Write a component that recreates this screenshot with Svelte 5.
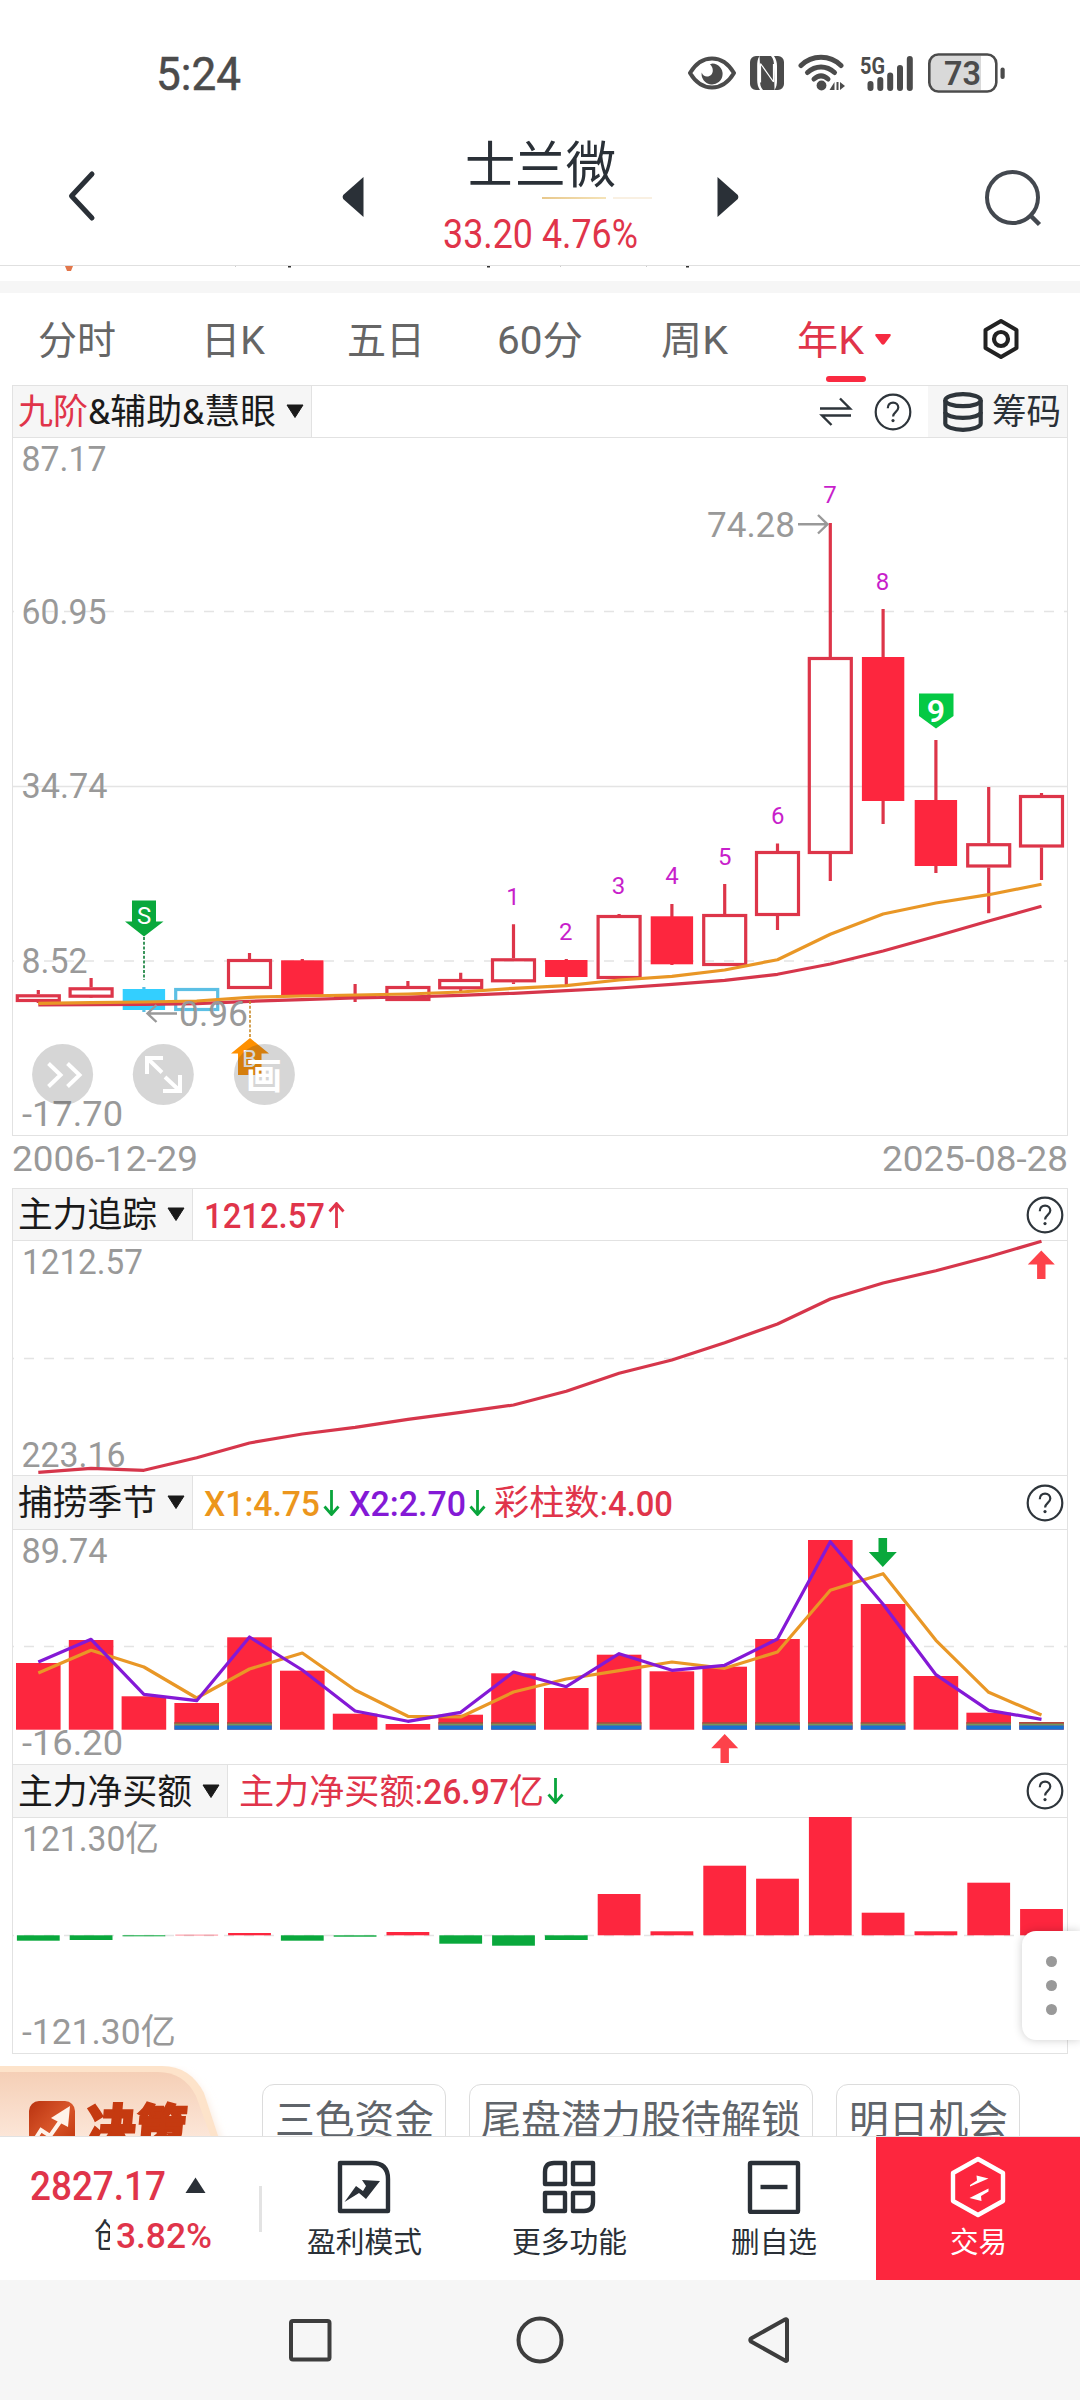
<script>
  const cx = (i) => 38.3 + i * 52.8;
  const path = (ys) => ys.map((y, i) => `${cx(i)},${y}`).join(' ');

  const tabs = [
    { text: '分时', w: 78 },
    { text: '日K', w: 64, shift: true },
    { text: '五日', w: 78 },
    { text: '60分', w: 86 },
    { text: '周K', w: 67 }
  ];

  // high, body top, body bottom, low, kind (h = hollow, f = filled)
  const candles = [
    [990, 994.3, 1002, 1003, 'h'],
    [978, 987.3, 997.7, 997, 'h'],
    [987, 989, 1010, 1012, 'f', 'cyan'],
    [988, 988, 1011, 1011, 'h', 'cyan'],
    [953, 959, 989, 989, 'h'],
    [959, 960.3, 995, 995, 'f'],
    [984, 996, 998.5, 1002, 'f'],
    [981, 986, 1001, 1001, 'h'],
    [972.7, 979, 989.3, 991, 'h'],
    [924.3, 958.3, 982.3, 984, 'h'],
    [959, 960, 977, 985, 'f'],
    [914, 915, 979, 980, 'h'],
    [904, 916.3, 964.3, 965, 'f'],
    [884, 914, 966, 966, 'h'],
    [843.6, 851, 916, 930, 'h'],
    [523, 657, 854, 881, 'h'],
    [609, 657, 801, 824, 'f'],
    [740, 800, 866, 873, 'f'],
    [787, 843.2, 867.5, 913.3, 'h'],
    [793, 795, 847.5, 880, 'h']
  ];
  const maFast = [1003.3, 1002.7, 1002, 1001, 997.3, 996, 995, 994, 992, 988.3, 985.7, 980, 976.3, 970, 959.7, 934.3, 914, 903, 894.7, 884.3];
  const maSlow = [1004.9, 1004.6, 1004.3, 1003.7, 1001.3, 999.7, 998, 997, 995.3, 993.3, 990.7, 988, 984.3, 980.3, 974.3, 964, 951, 936.3, 921, 906.3];
  const counts = [
    [513, 905, '1'], [565.8, 940, '2'], [618.6, 894, '3'], [672, 884, '4'],
    [724.8, 865, '5'], [777.8, 824, '6'], [830, 502.5, '7'], [882.6, 590, '8']
  ];

  const track = [1472.3, 1468.3, 1470.3, 1457.7, 1443, 1434, 1427.3, 1419.3, 1412.3, 1405, 1391.3, 1373.3, 1360, 1342.7, 1324, 1299, 1283, 1270.7, 1256.7, 1241.3];

  const season = [1663, 1640, 1696.3, 1703, 1637.3, 1670.7, 1713.7, 1724, 1714.7, 1673.3, 1688, 1654.7, 1671.3, 1666.7, 1639, 1540, 1604, 1676, 1712.7, 1722];
  const blue = [3, 4, 8, 9, 11, 13, 14, 15, 16, 18, 19];
  const x1 = [1673, 1650.3, 1667, 1698, 1669, 1653, 1690, 1716.3, 1717, 1692, 1679, 1670.7, 1662, 1668.3, 1652, 1590.3, 1573.7, 1640.3, 1692.3, 1715];
  const x2 = [1662, 1639.3, 1694.3, 1700.7, 1637, 1670, 1711, 1721.3, 1712.3, 1672, 1686.7, 1653.7, 1670.3, 1665.3, 1639, 1541.7, 1604.3, 1674.7, 1710.3, 1719.3];

  const netZero = 1935.3;
  const net = [1940.7, 1940, 1936.3, 1934.8, 1933, 1940.7, 1936.7, 1932, 1943.7, 1945.7, 1940, 1894, 1931.3, 1865.7, 1878.7, 1817, 1912.7, 1931.3, 1882.7, 1909];
</script>

{#snippet fit(text, w, size, cls)}
  <svg class="fit {cls}" width={w} height={size} overflow="visible">
    <text x="0" y={size * 0.865} font-size={size} textLength={w} lengthAdjust="spacingAndGlyphs">{text}</text>
  </svg>
{/snippet}

{#snippet axis(text, x, y, w)}
  <text class="axis" {x} {y} textLength={w} lengthAdjust="spacingAndGlyphs">{text}</text>
{/snippet}

{#snippet help()}
  <svg class="help" width="38" height="38" viewBox="0 0 38 38">
    <circle cx="19" cy="19" r="17.3" fill="none" stroke="#2e353b" stroke-width="2.2" />
    <path d="M13.8 15.2c0-3.4 2.2-5.6 5.3-5.6s5.2 2.1 5.2 5c0 4.2-5.2 4.4-5.2 9" fill="none" stroke="#2e353b" stroke-width="2.2" />
    <circle cx="19" cy="27.6" r="1.6" fill="#2e353b" />
  </svg>
{/snippet}

{#snippet caret()}
  <svg width="18" height="15" viewBox="0 0 18 15"><path d="M1 1h16l-8 12.5z" fill="#1a1a1a" stroke="#1a1a1a" stroke-linejoin="round" /></svg>
{/snippet}

{#snippet trend(up)}
  <svg class="trend" width="17" height="26" viewBox="0 0 17 26">
    {#if up}
      <path d="M8.5 26V2M1.5 9.5l7-8 7 8" fill="none" stroke="#e0344a" stroke-width="2.8" />
    {:else}
      <path d="M8.5 0v24M1.5 16.5l7 8 7-8" fill="none" stroke="#0aa53c" stroke-width="2.8" />
    {/if}
  </svg>
{/snippet}

<div class="screen">
  <div class="status">
    {@render fit('5:24', 85, 46, 'clock')}
    <div class="status-icons">
      <svg width="48" height="36" viewBox="0 0 48 36" class="eye">
        <path d="M2 18C8 8 16 3.5 24 3.5S40 8 46 18C40 28 32 32.500 24 32.500S8 28 2 18z" fill="none" stroke="#4b4b4b" stroke-width="4" stroke-linejoin="round" />
        <path d="M24.500 8.500a10.500 10.500 0 1 1-10.800 9c.8 2.500 3 4 5.300 4 3.500 0 5.800-2.600 5.800-6 0-2.500-.8-4.500-2.800-6.300z" fill="#4b4b4b" />
      </svg>
      <svg width="34" height="36" viewBox="0 0 34 36" class="nfc">
        <path d="M6 1h3.500c-2 3-2.300 6-2.300 10v14c0 4 .8 7 2.800 10H6a6 6 0 0 1-6-6V7a6 6 0 0 1 6-6zM24 1h4a6 6 0 0 1 6 6v22a6 6 0 0 1-6 6h-3.500c2-3 2.500-6 2.500-10V11c0-4-1-7-3-10z" fill="#4b4b4b" />
        <path d="M9.500 1H21c2.600 3 3 6 3 10v16L14 15v16l-4-5V11zM24.500 35H13c-2.600-3-3-6-3-10V9l11 14V8l3 4z" fill="#4b4b4b" />
        <path d="M10.500 8.500v19M10.500 8.500l13 18.500M23.500 27V9" fill="none" stroke="#fff" stroke-width="1.2" />
      </svg>
      <svg width="48" height="38" viewBox="0 0 48 38" class="wifi">
        <g fill="none" stroke="#4b4b4b" stroke-width="5" stroke-linecap="round">
          <path d="M3 11.500C14 .5 32 .5 43 11.500" />
          <path d="M9.500 18.500c8-7.500 19-7.500 27 0" />
          <path d="M16 25c4.500-4 9.500-4 14 0" />
        </g>
        <circle cx="23.500" cy="31.500" r="4.900" fill="#4b4b4b" />
        <path d="M36.500 28v8h-5zM38.500 28v8h2v-8zM42 28v8l5-4z" fill="#4b4b4b" />
      </svg>
      <svg width="54" height="38" viewBox="0 0 54 38" class="signal">
        <text x="0" y="19.500" font-size="24" font-weight="700" textLength="25" lengthAdjust="spacingAndGlyphs" fill="#4b4b4b">5G</text>
        <g stroke="#4b4b4b" stroke-width="6" stroke-linecap="round">
          <path d="M10.500 30v4M20.300 26v8M30.200 21.500v12.500M40 14v20M49.800 5v29" />
        </g>
      </svg>
      <svg width="78" height="40" viewBox="0 0 78 40" class="battery">
        <path d="M9 3h44v34H9a7 7 0 0 1-7-7V10a7 7 0 0 1 7-7z" fill="#d9d9d9" />
        <rect x="1.300" y="1.500" width="67" height="37" rx="9" fill="none" stroke="#4b4b4b" stroke-width="2.600" />
        <rect x="72.500" y="14.500" width="4.200" height="11.500" rx="2.100" fill="#4b4b4b" />
        <text x="16" y="32" font-size="33" font-weight="600" textLength="37" lengthAdjust="spacingAndGlyphs" fill="#4b4b4b">73</text>
      </svg>
    </div>
  </div>

  <header>
    <svg class="back" width="32" height="52" viewBox="0 0 32 52"><path d="M27 4 6.500 26 27 48" fill="none" stroke="#2a3037" stroke-width="5" stroke-linecap="round" stroke-linejoin="round" /></svg>
    <svg class="prev" width="22" height="42" viewBox="0 0 22 42"><path d="M21.500 1v40L1.200 23q-1.200-2 0-4z" fill="#2a3037" /></svg>
    <div class="title">
      {@render fit('士兰微', 151, 50, 'ink')}
      <div class="gold"><i></i><b></b></div>
      {@render fit('33.20 4.76%', 195, 40, 'red')}
    </div>
    <svg class="next" width="22" height="42" viewBox="0 0 22 42"><path d="M.5 1v40L20.800 23q1.200-2 0-4z" fill="#2a3037" /></svg>
    <svg class="search" width="60" height="60" viewBox="0 0 60 60">
      <circle cx="28.500" cy="28.500" r="25.500" fill="none" stroke="#43484f" stroke-width="4" />
      <path d="m46.500 46.500 9 9" stroke="#43484f" stroke-width="4.500" />
    </svg>
  </header>

  <div class="peek">
    <svg width="1080" height="15" viewBox="0 0 1080 15">
      <path d="M65 0h8l-2 5h-4z" fill="#e2764a" />
      <path d="M288 0h3v1.500h-3zM487 0h3v1.500h-3zM686 0h3v1.500h-3z" fill="#333" />
      <path d="M235 0h1v1h-1zM560 0h1v1h-1zM646 0h1v1h-1z" fill="#ccc" />
    </svg>
  </div>
  <div class="band"></div>

  <nav class="tabs">
    {#each tabs as t}
      <div class="tab" class:shift={t.shift}>{@render fit(t.text, t.w, 39, 'mute')}</div>
    {/each}
    <div class="tab active">
      <div class="row">
        {@render fit('年K', 67, 39, 'red')}
        <svg width="18" height="13" viewBox="0 0 18 13"><path d="M2 1h14q1.500.5.500 2l-6 8q-1.500 1.500-3 0l-6-8q-1-1.500.5-2z" fill="#f62b41" /></svg>
      </div>
      <div class="underline"></div>
    </div>
    <div class="tab gear">
      <svg width="38" height="42" viewBox="0 0 38 42">
        <path d="M19 3 34.500 12v18L19 39 3.500 30V12z" fill="none" stroke="#222" stroke-width="4" stroke-linejoin="round" />
        <circle cx="19" cy="21" r="7" fill="none" stroke="#222" stroke-width="4.200" />
      </svg>
    </div>
  </nav>

  <section class="panel main">
    <div class="head">
      <div class="name">
        {@render fit('九阶', 70, 35, 'red')}
        {@render fit('&辅助&慧眼', 188, 35, 'black')}
        <span class="gap"></span>
        {@render caret()}
      </div>
      <div class="tools">
        <svg width="34" height="30" viewBox="0 0 34 30"><path d="M1 11.500h30L21 1.500M32 18.500H3l9.500 9.500" fill="none" stroke="#2e353b" stroke-width="2.400" /></svg>
        {@render help()}
        <div class="chips-btn">
          <svg width="40" height="40" viewBox="0 0 40 40">
            <g fill="none" stroke="#2e353b" stroke-width="4.200">
              <ellipse cx="20" cy="8.200" rx="17.700" ry="6" />
              <path d="M2.300 8v23.500c0 3.300 8 6.300 17.700 6.300s17.700-3 17.700-6.300V8" />
              <path d="M2.300 20c0 3.300 8 5.800 17.700 5.800s17.700-2.500 17.700-5.800" />
            </g>
          </svg>
          {@render fit('筹码', 69, 35, 'ink')}
        </div>
      </div>
    </div>
    <svg class="plot" width="1054" height="697" viewBox="13 438 1054 697">
      <g class="grid">
        <path class="dash" d="M13 611.500H1067M13 961H1067" />
        <path d="M13 786.500H1067" />
      </g>
      {@render axis('87.17', 21.5, 471, 85)}
      {@render axis('60.95', 21.5, 624, 85)}
      {@render axis('34.74', 21.5, 798, 86)}
      {@render axis('8.52', 21.5, 973, 66)}
      {@render axis('-17.70', 22, 1126, 101)}
      {#each candles as [hi, top, bottom, lo, kind, tone], i}
        <g class="candle {tone ?? ''}">
          {#if kind === 'h'}
            <path d="M{cx(i)} {hi}V{top}M{cx(i)} {bottom}V{lo}" />
            <rect x={cx(i) - 21} y={top + 1.5} width="42" height={bottom - top - 3} fill="none" />
          {:else}
            <path d="M{cx(i)} {hi}V{lo}" />
            <rect class="solid" x={cx(i) - 21.2} y={top} width="42.4" height={bottom - top} />
          {/if}
        </g>
      {/each}
      <polyline class="line slow" points={path(maSlow)} />
      <polyline class="line orange" points={path(maFast)} />
      {#each counts as [x, y, n]}
        <text class="count" {x} {y}>{n}</text>
      {/each}
      {@render axis('74.28', 707, 537, 88)}
      <path class="pointer" d="M798 524.300H827M818 515l9.500 9.300L818 533.500" />
      {@render axis('0.96', 179, 1026, 69)}
      <path class="pointer" d="M177 1013.500H148M156.500 1005l-9 8.500 9 8.500" />
      <path d="M919 693.500h34.500v22.500L936 728.500 919 716z" fill="#05c944" />
      <text x="936" y="721.500" font-size="32" font-weight="600" fill="#fff" text-anchor="middle">9</text>

      <path d="M144 937V980" stroke="#0a7c34" stroke-width="1.600" stroke-dasharray="3 1.700" />
      <path d="M132 900.500h24v21h7.500L144 936.500 125 921.500h7z" fill="#09a83c" />
      <text class="mark" x="144" y="924">S</text>
      <path d="M250 1001V1038" stroke="#c98a28" stroke-width="1.600" stroke-dasharray="3 1.700" />
      <path d="M250 1038l19 15.500h-7.500V1075H238v-21.500h-7z" fill="#fe9000" />
      <text class="mark" x="249.500" y="1067">B</text>

      <g class="round">
        <circle cx="62.600" cy="1074.500" r="30.500" />
        <circle cx="163.300" cy="1074.500" r="30.500" />
        <circle cx="264.400" cy="1074.500" r="30.500" />
      </g>
      <g fill="none" stroke="#fff" stroke-width="4">
        <path d="M48.500 1063.500l12 11.500-12 11.500M67.500 1063.500l12 11.500-12 11.500" />
        <path d="M163 1058H147v16M147 1058l15 14.500M163 1091h17v-16M180 1091l-15-14" />
      </g>
      <text x="264" y="1088.500" font-size="36" font-weight="700" fill="#fff" text-anchor="middle">画</text>
    </svg>
  </section>

  <div class="dates">
    {@render fit('2006-12-29', 186, 35.5, 'gray')}
    {@render fit('2025-08-28', 186, 35.5, 'gray')}
  </div>

  <section class="panel p2">
    <div class="head">
      <div class="name">
        {@render fit('主力追踪', 139, 35, 'black')}
        <span class="gap"></span>
        {@render caret()}
      </div>
      <div class="values">
        {@render fit('1212.57', 121, 35.5, 'red medium')}
        {@render trend(true)}
      </div>
      {@render help()}
    </div>
    <svg class="plot" width="1054" height="234" viewBox="13 1241 1054 234">
      <path class="grid dash" d="M13 1358.500H1067" />
      {@render axis('1212.57', 22, 1273.5, 121)}
      {@render axis('223.16', 21.5, 1466.500, 104)}
      <polyline class="line slow" points={path(track)} />
      <path d="M1041.300 1250.500l13.500 14h-9.300v14.500h-8.400v-14.500h-9.300z" fill="#fd424a" />
    </svg>
  </section>

  <section class="panel p3">
    <div class="head">
      <div class="name">
        {@render fit('捕捞季节', 139, 35, 'black')}
        <span class="gap"></span>
        {@render caret()}
      </div>
      <div class="values">
        {@render fit('X1:4.75', 116, 35.5, 'amber medium')}
        {@render trend(false)}
        <span class="gap"></span>
        {@render fit('X2:2.70', 117, 35.5, 'violet medium')}
        {@render trend(false)}
        <span class="gap"></span>
        {@render fit('彩柱数:', 114, 35, 'red')}
        {@render fit('4.00', 65, 35.5, 'red medium')}
      </div>
      {@render help()}
    </div>
    <svg class="plot" width="1054" height="234" viewBox="13 1530 1054 234">
      <path class="grid dash" d="M13 1646.500H1067" />
      {@render axis('89.74', 21.5, 1562.5, 86)}
      {@render axis('-16.20', 22, 1754.5, 101)}
      {#each season as top, i}
        <rect x={cx(i) - 22.3} y={top} width="44.600" height={1729.7 - top} fill="#fd263e" />
        {#if blue.includes(i)}
          <rect x={cx(i) - 22.3} y="1722" width="44.600" height="2" fill="#b0483f" />
          <rect x={cx(i) - 22.3} y="1723.700" width="44.600" height="2" fill="#6f9a5c" />
          <rect x={cx(i) - 22.3} y="1725.500" width="44.600" height="4.200" fill="#1872d0" />
        {/if}
      {/each}
      <polyline class="line orange" points={path(x1)} />
      <polyline class="line purple" points={path(x2)} />
      <path d="M878.500 1538h8.600v14h9.700l-14 15-14-15h9.700z" fill="#09a83c" />
      <path d="M724.700 1734l13.500 14.300h-9.300V1763h-8.400v-14.700h-9.300z" fill="#fd424a" />
    </svg>
  </section>

  <section class="panel p4">
    <div class="head">
      <div class="name">
        {@render fit('主力净买额', 174, 35, 'black')}
        <span class="gap"></span>
        {@render caret()}
      </div>
      <div class="values">
        {@render fit('主力净买额:', 184, 35, 'red')}
        {@render fit('26.97', 86, 35.5, 'red medium')}
        {@render fit('亿', 35, 35, 'red')}
        {@render trend(false)}
      </div>
      {@render help()}
    </div>
    <svg class="plot" width="1054" height="235" viewBox="13 1818 1054 235">
      <path class="grid dash" d="M13 1935.500H1067" />
      {@render axis('121.30亿', 22, 1851, 137)}
      {@render axis('-121.30亿', 22, 2044, 154)}
      {#each net as y, i}
        <rect
          x={cx(i) - 21.4}
          y={Math.min(y, netZero)}
          width="42.800"
          height={Math.abs(y - netZero)}
          fill={y > netZero ? '#09a83c' : '#fd263e'}
        />
      {/each}
    </svg>
    <div class="float"><i></i><i></i><i></i></div>
  </section>

  <div class="promo">
    <div class="badge">
      <svg width="240" height="82" viewBox="0 0 240 82">
        <defs>
          <linearGradient id="peach" x1="0" y1="0" x2="0" y2="1">
            <stop offset="0" stop-color="#f5cfb6" />
            <stop offset="1" stop-color="#fdeade" />
          </linearGradient>
          <linearGradient id="rust" x1="0" y1="0" x2="1" y2="1">
            <stop offset="0" stop-color="#b93310" />
            <stop offset="0.500" stop-color="#d9562a" />
            <stop offset="1" stop-color="#bb3008" />
          </linearGradient>
          <filter id="soft" x="-20%" y="-20%" width="140%" height="140%"><feGaussianBlur stdDeviation="5" /></filter>
        </defs>
        <path d="M0 4h168q26 4 38 32l22 60H0z" fill="#f8e4d4" filter="url(#soft)" />
        <path d="M0 0h162q28 0 42 27l18 55H0z" fill="#fde3ca" />
        <path d="M0 6h158q26 0 38 24l19 52H0z" fill="url(#peach)" />
        <rect x="29" y="35" width="46" height="52" rx="10" fill="url(#rust)" />
        <path d="M34 75l7-11 9 6 14-20" fill="none" stroke="#fff3ea" stroke-width="4" />
        <path d="M70 40l-19 12 17 9z" fill="#fff3ea" />
        <text x="0" y="0" transform="translate(84 80) skewX(-5)" font-size="50" font-weight="900" textLength="101" fill="#c53a10" stroke="#c53a10" stroke-width="2.500">决策</text>
      </svg>
    </div>
    <div class="chip c1">{@render fit('三色资金', 159, 40, 'slate')}</div>
    <div class="chip c2">{@render fit('尾盘潜力股待解锁', 320, 40, 'slate')}</div>
    <div class="chip c3">{@render fit('明日机会', 159, 40, 'slate')}</div>
  </div>

  <footer>
    <div class="index">
      <div class="row top">
        {@render fit('2827.17', 136, 41.5, 'red medium')}
        <svg width="21" height="16" viewBox="0 0 21 16"><path d="M10.500.5 20.500 16H.5z" fill="#2a3037" /></svg>
      </div>
      <div class="row sub">
        <div class="cut">{@render fit('创', 33, 33, 'ink')}</div>
        {@render fit('3.82%', 96, 34.5, 'red medium')}
      </div>
    </div>
    <div class="divider"></div>
    <div class="action">
      <svg width="54" height="54" viewBox="0 0 54 54">
        <path d="M3 3h32q16 0 16 16v32H3z" fill="none" stroke="#2a3037" stroke-width="4.400" stroke-linejoin="round" />
        <path d="M7.500 42 19 26l7 5 3-5-4-6 18 1-14 18-7-6z" fill="#2a3037" />
      </svg>
      {@render fit('盈利模式', 115, 29, 'ink')}
    </div>
    <div class="action">
      <svg width="54" height="54" viewBox="0 0 54 54">
        <g fill="none" stroke="#2a3037" stroke-width="4.400" stroke-linejoin="round">
          <path d="M12 3h11v21H3V12q0-9 9-9zM31 3h20v21H31zM3 33h20v18H3zM31 33h20v9q0 9-9 9H31z" />
        </g>
      </svg>
      {@render fit('更多功能', 115, 29, 'ink')}
    </div>
    <div class="action">
      <svg width="54" height="54" viewBox="0 0 54 54">
        <rect x="3" y="3" width="48" height="49" rx="1" fill="none" stroke="#2a3037" stroke-width="4.400" />
        <path d="M13.500 27h27" stroke="#2a3037" stroke-width="4.400" />
      </svg>
      {@render fit('删自选', 86, 29, 'ink')}
    </div>
    <div class="action trade">
      <svg width="56" height="62" viewBox="0 0 56 62">
        <path d="M28 3 53 17v28L28 59 3 45V17z" fill="none" stroke="#fff" stroke-width="4.400" stroke-linejoin="round" />
        <path d="M20 32 30 26M20 30.500 38.500 22.500 26.500 19.500 27 24.500 20 29zM38.500 32.500 19.500 42 31.500 45 31 40 38.500 35.500z" fill="#fff" />
      </svg>
      {@render fit('交易', 57, 29, 'white')}
    </div>
  </footer>

  <div class="sysnav">
    <svg width="48" height="48" viewBox="0 0 48 48"><rect x="5" y="5" width="38.500" height="38.500" rx="2" fill="none" stroke="#3d3d3d" stroke-width="4" /></svg>
    <svg width="48" height="48" viewBox="0 0 48 48"><circle cx="24" cy="24" r="21.500" fill="none" stroke="#3d3d3d" stroke-width="4" /></svg>
    <svg width="48" height="48" viewBox="0 0 48 48"><path d="M41 4v40.500q-1 .8-2 0L5 25.500q-1.500-1.500 0-3L39 3.500q1-.8 2 .5z" fill="none" stroke="#3d3d3d" stroke-width="4" stroke-linejoin="round" /></svg>
  </div>
</div>

<style>
  :global(body) { margin: 0; background: #fff; }
  .screen {
    width: 1080px;
    height: 2400px;
    display: flex;
    flex-direction: column;
    overflow: hidden;
    background: #fff;
    font-family: Roboto, 'Noto Sans CJK SC', sans-serif;
  }
  .screen > * { box-sizing: border-box; flex: none; }
  svg { display: block; flex: none; }
  .fit { overflow: visible; }
  .clock { fill: #4b4b4b; stroke: #4b4b4b; stroke-width: 0.5; }
  .ink { fill: #2a3037; }
  .black { fill: #1a1a1a; }
  .mute { fill: #666; }
  .gray { fill: #999; }
  .slate { fill: #5f646a; }
  .white { fill: #fff; }
  .red { fill: #e0344a; }
  .amber { fill: #ec961c; }
  .violet { fill: #8419d6; }
  .medium { font-weight: 500; }
  .row { display: flex; align-items: center; }

  .status {
    height: 146px;
    padding: 0 74px 0 156px;
    display: flex;
    align-items: center;
    justify-content: space-between;
  }
  .status-icons { display: flex; align-items: center; gap: 14px; }

  header {
    height: 120px;
    border-bottom: 1px solid #e0e0e0;
    display: flex;
    align-items: flex-start;
    padding: 0 36px 0 65px;
  }
  .back { margin-top: 24px; }
  .prev { margin: 30px 0 0 245px; }
  .next { margin: 30px 0 0 51px; }
  .search { margin: 23px 0 0 245px; }
  .title { flex: none; width: 252px; display: flex; flex-direction: column; align-items: center; margin: -6px 0 0 50px; }
  .gold { display: flex; gap: 7px; align-self: flex-end; margin: 7px 14px 14px 0; height: 2px; }
  .gold i { width: 64px; background: linear-gradient(90deg, #e8c88c, #f5e3b8); }
  .gold b { width: 39px; background: #f9f0e2; }
  .peek { height: 15px; }
  .band { height: 12px; background: #f6f6f6; }

  .tabs { height: 92px; display: grid; grid-template-columns: repeat(7, 154.3px); }
  .tab { display: flex; flex-direction: column; align-items: center; padding-top: 27px; }
  .tab.shift { padding-left: 4px; }
  .tab.active { padding-right: 8px; }
  .tab.gear { padding-top: 25px; padding-right: 4px; }
  .tab .row { gap: 10px; }
  .underline { width: 40px; height: 6px; border-radius: 3px; background: #fa2a41; margin: 17px 0 0 3px; }

  .panel { position: relative; margin: 0 12px; border: 1px solid #e2e2e2; border-bottom: 0; }
  .panel.main { border-bottom: 1px solid #e2e2e2; height: 751px; }
  .p2 { height: 287px; }
  .p3 { height: 289px; }
  .p4 { height: 290px; border-bottom: 1px solid #e2e2e2; }
  .head { box-sizing: border-box; height: 52px; border-bottom: 1px solid #e2e2e2; display: flex; align-items: center; }
  .p3 .head { height: 54px; }
  .p4 .head { height: 53px; }
  .name {
    box-sizing: border-box;
    height: 100%;
    display: flex;
    align-items: center;
    padding: 0 7px 0 5px;
    background: #f6f6f6;
    border-right: 1px solid #e2e2e2;
  }
  .name .gap { width: 10px; }
  .values { display: flex; align-items: center; padding-left: 11px; }
  .p4 .values { padding-left: 11px; }
  .values .gap { width: 8.5px; }
  .trend { margin-left: 3px; }
  .head > .help { margin-left: auto; margin-right: 3px; }
  .tools { margin-left: auto; height: 100%; display: flex; align-items: center; gap: 21px; }
  .chips-btn { height: 100%; box-sizing: border-box; display: flex; align-items: center; gap: 9px; background: #f6f6f6; width: 139px; padding-left: 15px; margin-left: -5px; }

  .plot { overflow: visible; }
  .grid, .grid path { fill: none; stroke: #e4e4e4; stroke-width: 1.3; }
  .dash { stroke-dasharray: 10 10; stroke-dashoffset: 9; }
  .axis { font-size: 35.500px; fill: #999; }
  .candle { stroke: #dd3549; stroke-width: 3.2; }
  .candle .solid { fill: #fd263e; stroke: none; }
  .candle.cyan { stroke: #5cbfe4; }
  .candle.cyan .solid { fill: #33cfff; }
  .line { fill: none; stroke-width: 3.200; stroke-linejoin: round; }
  .slow { stroke: #d6364b; }
  .orange { stroke: #e99726; }
  .purple { stroke: #8419d6; }
  .count { font-size: 24px; fill: #c81fcb; text-anchor: middle; }
  .mark { font-size: 24px; fill: #fff; text-anchor: middle; }
  .pointer { fill: none; stroke: #999; stroke-width: 2.400; }
  .round { fill: rgba(60, 60, 60, 0.21); }

  .dates { height: 52px; padding: 4px 12px 0; display: flex; justify-content: space-between; }

  .float {
    position: absolute;
    right: -13px;
    top: 166px;
    width: 58px;
    height: 109px;
    box-sizing: border-box;
    border-radius: 14px 0 0 14px;
    background: #fff;
    box-shadow: 0 0 10px rgba(0, 0, 0, 0.2);
    display: flex;
    flex-direction: column;
    align-items: center;
    justify-content: center;
    gap: 13px;
  }
  .float i { width: 11px; height: 11px; border-radius: 50%; background: #999; }

  .promo { height: 82px; display: flex; overflow: hidden; }
  .badge { width: 262px; margin-top: 12px; }
  .chip {
    box-sizing: border-box;
    height: 72px;
    margin-top: 30px;
    padding-top: 14px;
    border: 1px solid #dcdcdc;
    border-radius: 12px;
    display: flex;
    justify-content: center;
  }
  .c1 { width: 184px; }
  .c2 { width: 344px; margin-left: 23px; }
  .c3 { width: 184px; margin-left: 23px; }

  footer { height: 144px; border-top: 1px solid #e2e2e2; display: flex; }
  .index { width: 259px; }
  .row.top { gap: 19px; padding: 27px 0 0 30px; }
  .row.sub { padding: 12px 0 0 94px; }
  .cut { width: 16px; overflow: hidden; margin-right: 6px; }
  .cut .fit { overflow: hidden; }
  .divider { width: 3px; height: 46px; background: #e3e3e3; margin-top: 49px; }
  .action { width: 204.700px; display: flex; flex-direction: column; align-items: center; padding-top: 23px; gap: 14px; }
  .trade { background: #fd263e; padding-top: 19px; gap: 10px; height: 143px; box-sizing: border-box; flex: 1; }

  .sysnav { height: 120px; background: #f6f6f6; display: flex; justify-content: center; align-items: center; gap: 182px; }
</style>
